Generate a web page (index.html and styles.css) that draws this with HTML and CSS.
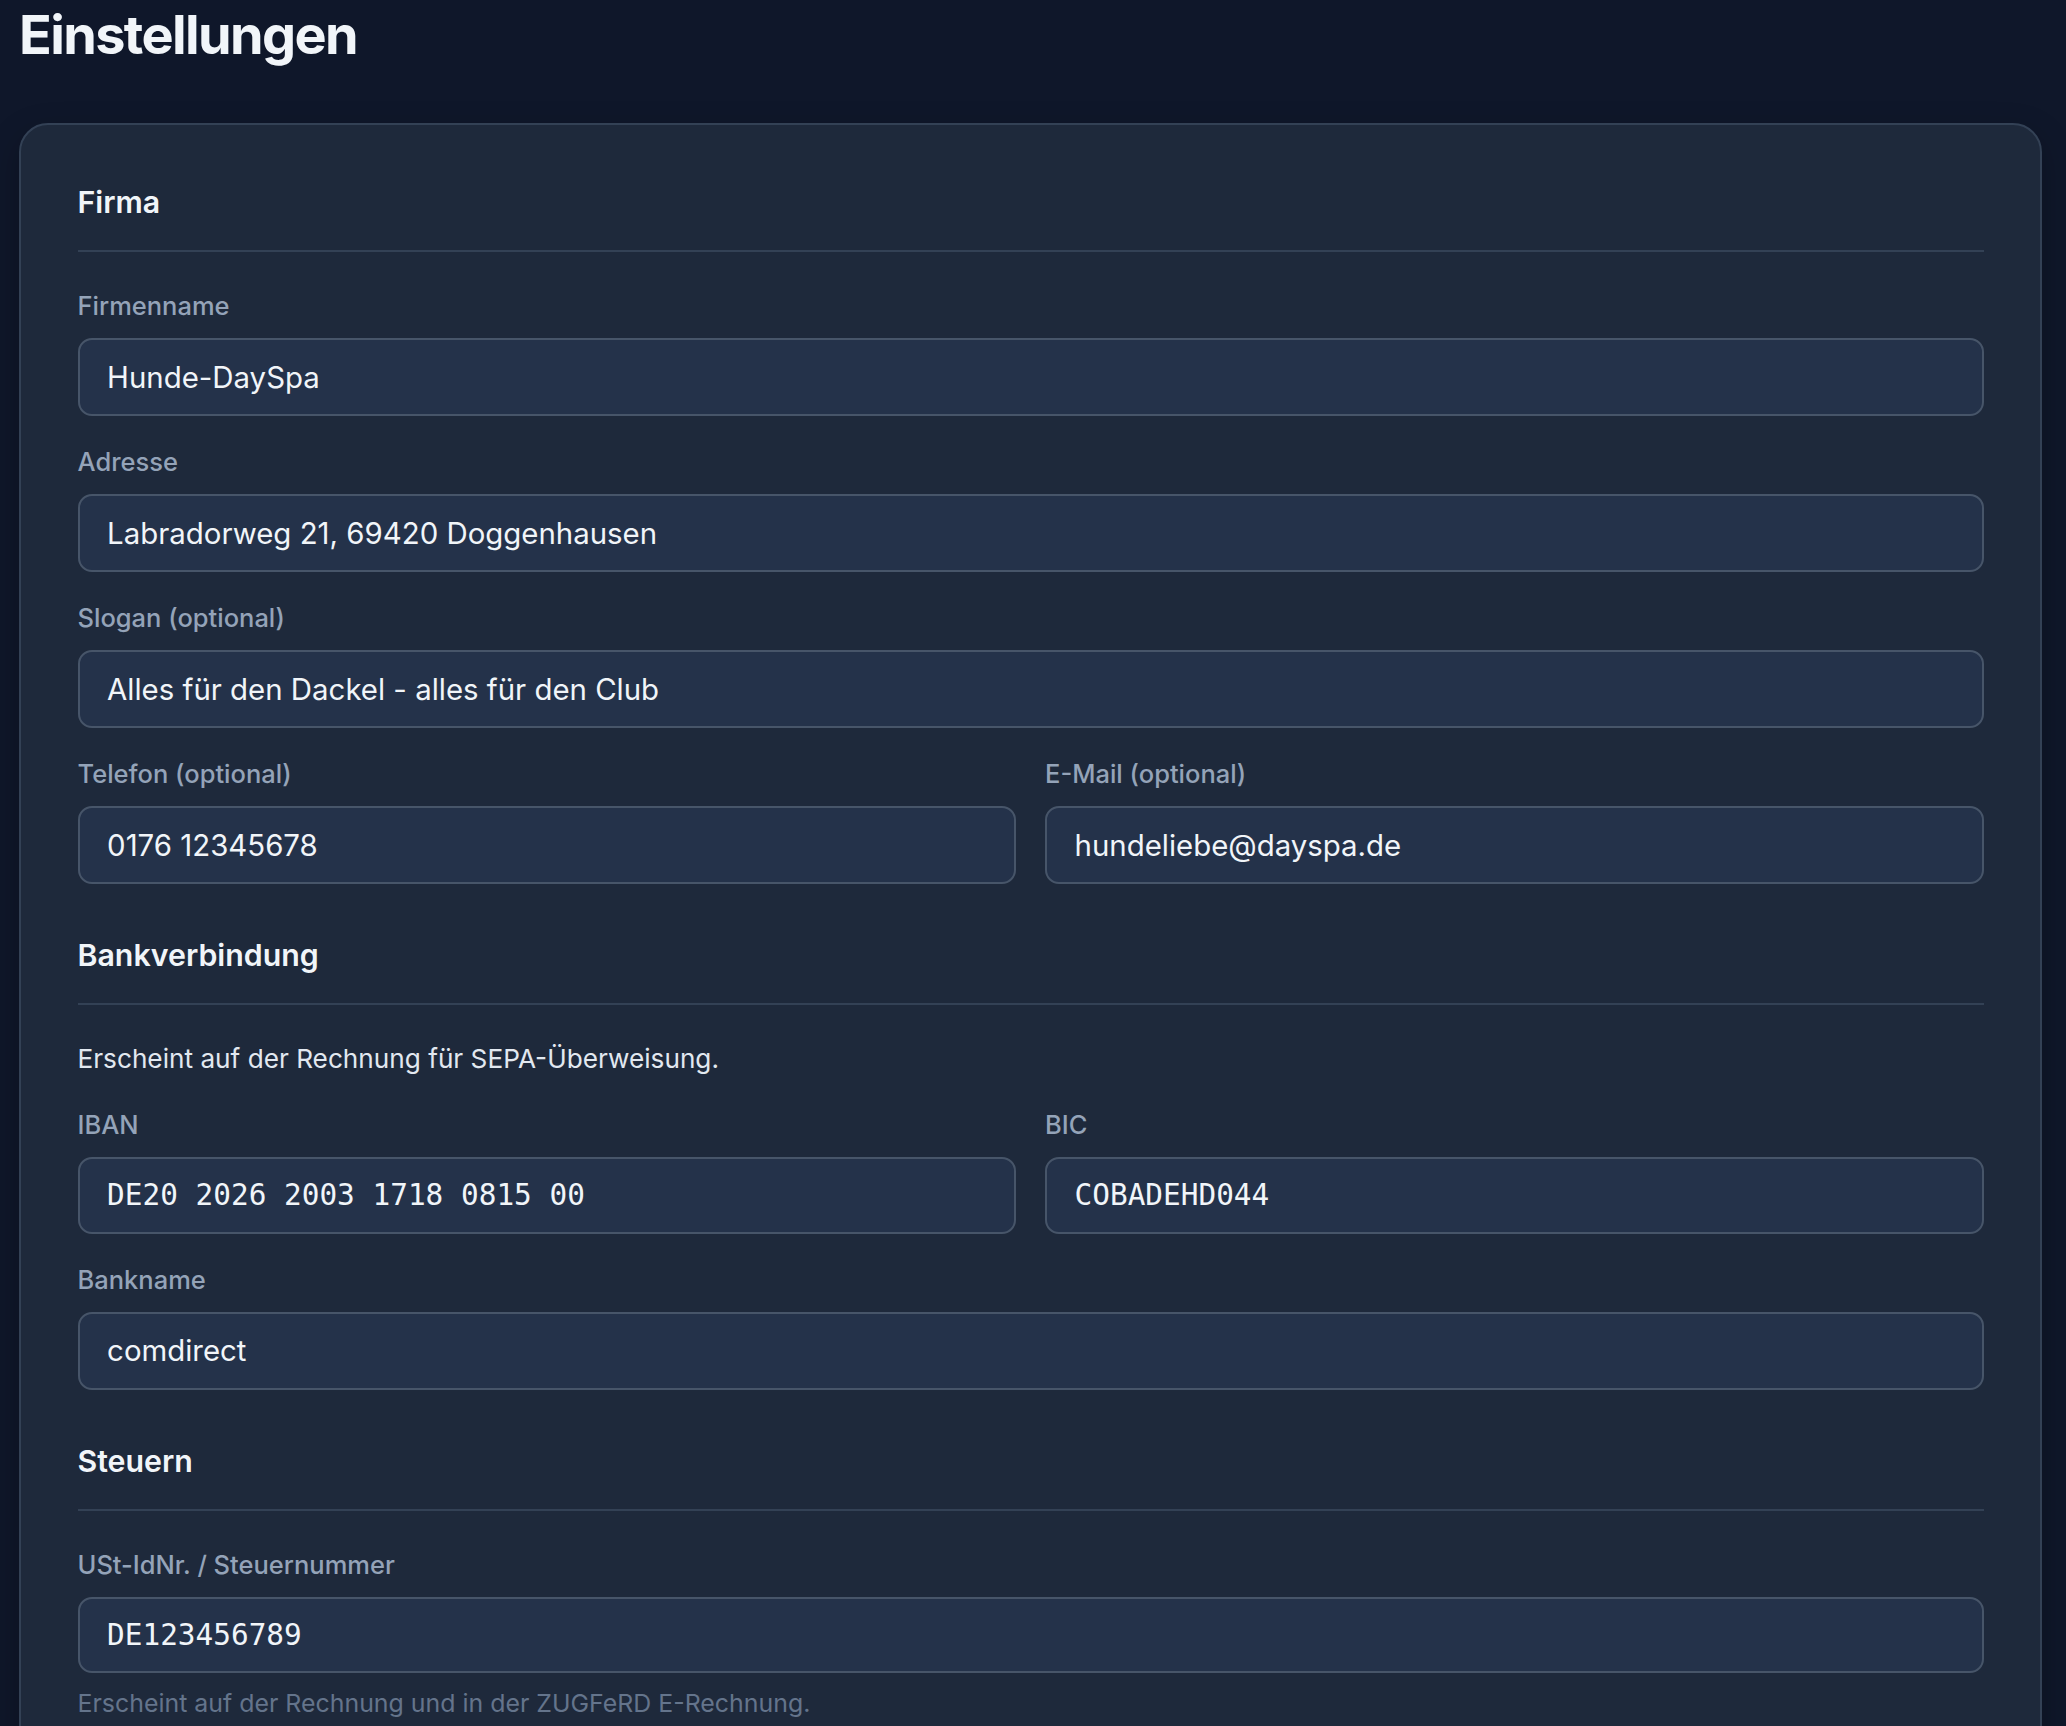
FILE: index.html
```html
<!DOCTYPE html>
<html lang="de">
<head>
  <meta charset="UTF-8">
  <meta name="viewport" content="width=device-width, initial-scale=1.0">
  <title>Einstellungen</title>
  <link rel="stylesheet" href="styles.css">
</head>
<body>
  <main class="page">
    <h1 class="page-title">Einstellungen</h1>

    <form class="card">
      <!-- Firma -->
      <section class="section">
        <h2 class="section-title">Firma</h2>
        <div class="field">
          <label for="company">Firmenname</label>
          <input id="company" type="text" value="Hunde-DaySpa">
        </div>
        <div class="field">
          <label for="address">Adresse</label>
          <input id="address" type="text" value="Labradorweg 21, 69420 Doggenhausen">
        </div>
        <div class="field">
          <label for="slogan">Slogan (optional)</label>
          <input id="slogan" type="text" value="Alles für den Dackel - alles für den Club">
        </div>
        <div class="row">
          <div class="field">
            <label for="phone">Telefon (optional)</label>
            <input id="phone" type="text" value="0176 12345678">
          </div>
          <div class="field">
            <label for="email">E-Mail (optional)</label>
            <input id="email" type="text" value="hundeliebe@dayspa.de">
          </div>
        </div>
      </section>

      <!-- Bankverbindung -->
      <section class="section">
        <h2 class="section-title">Bankverbindung</h2>
        <p class="section-note">Erscheint auf der Rechnung für SEPA-Überweisung.</p>
        <div class="row">
          <div class="field">
            <label for="iban">IBAN</label>
            <input id="iban" class="mono" type="text" value="DE20 2026 2003 1718 0815 00">
          </div>
          <div class="field">
            <label for="bic">BIC</label>
            <input id="bic" class="mono" type="text" value="COBADEHD044">
          </div>
        </div>
        <div class="field">
          <label for="bank">Bankname</label>
          <input id="bank" type="text" value="comdirect">
        </div>
      </section>

      <!-- Steuern -->
      <section class="section">
        <h2 class="section-title">Steuern</h2>
        <div class="field">
          <label for="taxid">USt-IdNr. / Steuernummer</label>
          <input id="taxid" class="mono" type="text" value="DE123456789">
          <p class="hint">Erscheint auf der Rechnung und in der ZUGFeRD E-Rechnung.</p>
        </div>
      </section>
    </form>
  </main>
</body>
</html>
```

FILE: styles.css
```css
:root {
  --page-bg: #0f172a;
  --card-bg: #1e293b;
  --card-border: #334155;
  --input-bg: #24324a;
  --input-border: #475569;
  --heading: #f1f5f9;
  --text: #f1f5f9;
  --label: #94a3b8;
  --note: #e2e8f0;
  --hint: #64748b;
}
html, body {
  margin: 0;
  background-color: var(--page-bg);
}
body {
  font-family: Inter, "Noto Sans", sans-serif;
  color: var(--text);
}
.page {
  padding: 2px 24px 0 19px;
}
.page-title {
  margin: 0 0 56px;
  font-size: 54px;
  line-height: 65px;
  font-weight: 700;
  letter-spacing: -0.03em;
  color: var(--heading);
}
.card {
  display: flex;
  flex-direction: column;
  gap: 50px;
  padding: 56px 56.5px;
  background-color: var(--card-bg);
  border: 2px solid var(--card-border);
  border-radius: 29px;
  box-shadow: 0 12px 32px rgba(0, 0, 0, 0.25);
}
.section {
  display: flex;
  flex-direction: column;
  gap: 28px;
}
.section-title {
  margin: 0 0 8px;
  padding-bottom: 27px;
  border-bottom: 2px solid var(--card-border);
  font-size: 30.3px;
  line-height: 42px;
  font-weight: 600;
  color: var(--heading);
}
.section-note {
  margin: 0 0 2px;
  font-size: 26.2px;
  line-height: 36px;
  color: var(--note);
}
.row {
  display: grid;
  grid-template-columns: 1fr 1fr;
  gap: 29px;
}
.field {
  display: flex;
  flex-direction: column;
  min-width: 0;
}
.field label {
  margin-bottom: 14px;
  font-size: 25.5px;
  line-height: 36px;
  font-weight: 500;
  color: var(--label);
}
.field input {
  box-sizing: border-box;
  width: 100%;
  height: 78px;
  margin: 0;
  padding: 0 27.6px;
  font-family: inherit;
  font-size: 29.4px;
  color: var(--text);
  background-color: var(--input-bg);
  border: 2px solid var(--input-border);
  border-radius: 14px;
  outline: none;
}
.field input.mono {
  height: 76.7px;
  font-family: "DejaVu Sans Mono", monospace;
}
.hint {
  margin: 11.5px 0 0;
  font-size: 24.9px;
  line-height: 36px;
  color: var(--hint);
}
```
